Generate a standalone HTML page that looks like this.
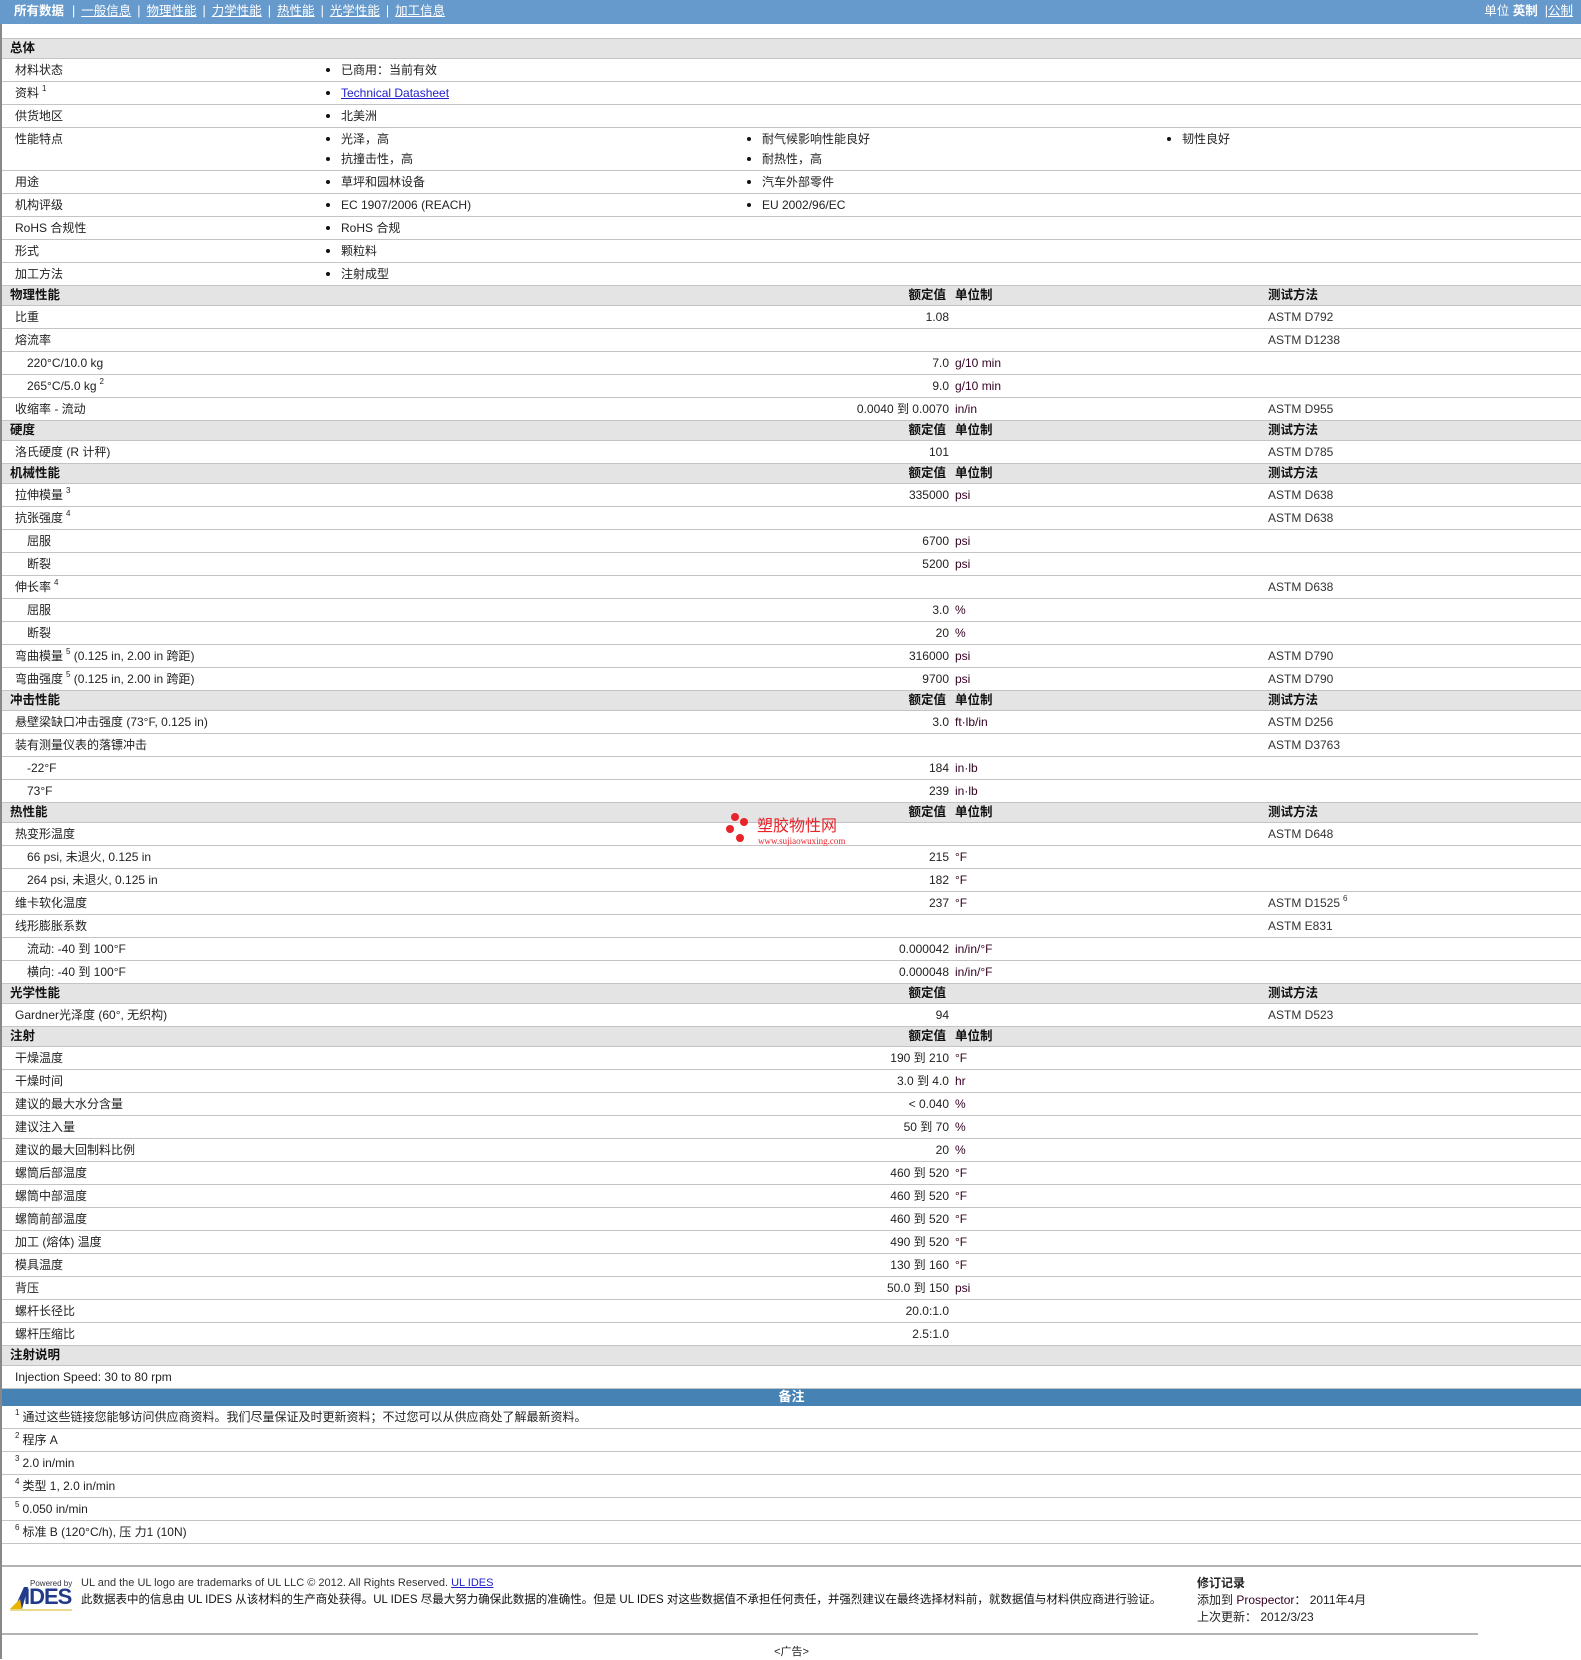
<!DOCTYPE html>
<html><head><meta charset="utf-8"><style>
*{margin:0;padding:0;box-sizing:border-box}
body{width:1581px;height:1660px;background:#fff;font-family:"Liberation Sans","Noto Sans CJK SC",sans-serif;font-size:12px;color:#222;position:relative;overflow:hidden}
.nav{position:absolute;left:0;top:0;width:1581px;height:24px;background:#6699cc;color:#fff;font-size:12.5px;line-height:22px}
.nav a{color:#fff;text-decoration:underline}
.nav .s{margin:0 6px}
.wrap{position:absolute;left:0;top:24px;width:1581px;border-left:2px solid #888}
.sp{height:15px;border-bottom:1px solid #c4c4c4}
.r,.h{position:relative;width:100%;border-bottom:1px solid #c4c4c4}
.r{height:23px;line-height:22px}
.r2{height:43px}
.h{height:20px;line-height:19px;background:#e4e4e4;font-weight:bold;font-size:12.5px;color:#111}
.h .t{position:absolute;left:8px}
.r span,.h span{position:absolute;white-space:nowrap}
.l{left:13px}.l2{left:25px}
.v{right:632px}.u{left:953px;color:#302}.m{left:1266px;color:#333}
.hv{right:635px}.hu{left:953px}.hm{left:1266px}
.b{padding-left:16px}
.b:before{content:"";position:absolute;left:1px;top:9px;width:4px;height:4px;border-radius:50%;background:#111}
.c1{left:323px}.c2{left:744px}.c3{left:1164px}
sup{font-size:8px;vertical-align:6px;margin-left:3px;line-height:0}
a.ln{color:#2222cc;text-decoration:underline}
.nb{height:17px;background:#4682b4;color:#fff;font-weight:bold;text-align:center;line-height:16px;font-size:13px}
.n sup{margin:0 3px 0 0}
</style></head><body>
<div class="nav"><span style="position:absolute;left:14px;font-weight:bold">所有数据</span>
<span style="position:absolute;left:66px"><span class="s">|</span><a>一般信息</a><span class="s">|</span><a>物理性能</a><span class="s">|</span><a>力学性能</a><span class="s">|</span><a>热性能</a><span class="s">|</span><a>光学性能</a><span class="s">|</span><a>加工信息</a></span>
<span style="position:absolute;right:8px">单位 <b>英制</b> &nbsp;|<a>公制</a></span></div>
<div class="wrap">
<div class="sp"></div>
<div class="h"><span class="t">总体</span></div>
<div class="r"><span class="l">材料状态</span><span class="c1 b">已商用：当前有效</span></div>
<div class="r"><span class="l">资料<sup>1</sup></span><span class="c1 b"><a class="ln">Technical Datasheet</a></span></div>
<div class="r"><span class="l">供货地区</span><span class="c1 b">北美洲</span></div>
<div class="r r2"><span class="l">性能特点</span><span class="c1 b">光泽，高</span><span class="c1 b" style="top:20px">抗撞击性，高</span><span class="c2 b">耐气候影响性能良好</span><span class="c2 b" style="top:20px">耐热性，高</span><span class="c3 b">韧性良好</span></div>
<div class="r"><span class="l">用途</span><span class="c1 b">草坪和园林设备</span><span class="c2 b">汽车外部零件</span></div>
<div class="r"><span class="l">机构评级</span><span class="c1 b">EC 1907/2006 (REACH)</span><span class="c2 b">EU 2002/96/EC</span></div>
<div class="r"><span class="l">RoHS 合规性</span><span class="c1 b">RoHS 合规</span></div>
<div class="r"><span class="l">形式</span><span class="c1 b">颗粒料</span></div>
<div class="r"><span class="l">加工方法</span><span class="c1 b">注射成型</span></div>

<div class="h"><span class="t">物理性能</span><span class="hv">额定值</span><span class="hu">单位制</span><span class="hm">测试方法</span></div>
<div class="r"><span class="l">比重</span><span class="v">1.08</span><span class="m">ASTM D792</span></div>
<div class="r"><span class="l">熔流率</span><span class="m">ASTM D1238</span></div>
<div class="r"><span class="l2">220°C/10.0 kg</span><span class="v">7.0</span><span class="u">g/10 min</span></div>
<div class="r"><span class="l2">265°C/5.0 kg<sup>2</sup></span><span class="v">9.0</span><span class="u">g/10 min</span></div>
<div class="r"><span class="l">收缩率 - 流动</span><span class="v">0.0040 到 0.0070</span><span class="u">in/in</span><span class="m">ASTM D955</span></div>
<div class="h"><span class="t">硬度</span><span class="hv">额定值</span><span class="hu">单位制</span><span class="hm">测试方法</span></div>
<div class="r"><span class="l">洛氏硬度 (R 计秤)</span><span class="v">101</span><span class="m">ASTM D785</span></div>
<div class="h"><span class="t">机械性能</span><span class="hv">额定值</span><span class="hu">单位制</span><span class="hm">测试方法</span></div>
<div class="r"><span class="l">拉伸模量<sup>3</sup></span><span class="v">335000</span><span class="u">psi</span><span class="m">ASTM D638</span></div>
<div class="r"><span class="l">抗张强度<sup>4</sup></span><span class="m">ASTM D638</span></div>
<div class="r"><span class="l2">屈服</span><span class="v">6700</span><span class="u">psi</span></div>
<div class="r"><span class="l2">断裂</span><span class="v">5200</span><span class="u">psi</span></div>
<div class="r"><span class="l">伸长率<sup>4</sup></span><span class="m">ASTM D638</span></div>
<div class="r"><span class="l2">屈服</span><span class="v">3.0</span><span class="u">%</span></div>
<div class="r"><span class="l2">断裂</span><span class="v">20</span><span class="u">%</span></div>
<div class="r"><span class="l">弯曲模量<sup>5</sup> (0.125 in, 2.00 in 跨距)</span><span class="v">316000</span><span class="u">psi</span><span class="m">ASTM D790</span></div>
<div class="r"><span class="l">弯曲强度<sup>5</sup> (0.125 in, 2.00 in 跨距)</span><span class="v">9700</span><span class="u">psi</span><span class="m">ASTM D790</span></div>
<div class="h"><span class="t">冲击性能</span><span class="hv">额定值</span><span class="hu">单位制</span><span class="hm">测试方法</span></div>
<div class="r"><span class="l">悬壁梁缺口冲击强度 (73°F, 0.125 in)</span><span class="v">3.0</span><span class="u">ft·lb/in</span><span class="m">ASTM D256</span></div>
<div class="r"><span class="l">装有测量仪表的落镖冲击</span><span class="m">ASTM D3763</span></div>
<div class="r"><span class="l2">-22°F</span><span class="v">184</span><span class="u">in·lb</span></div>
<div class="r"><span class="l2">73°F</span><span class="v">239</span><span class="u">in·lb</span></div>
<div class="h"><span class="t">热性能</span><span class="hv">额定值</span><span class="hu">单位制</span><span class="hm">测试方法</span></div>
<div class="r"><span class="l">热变形温度</span><span class="m">ASTM D648</span></div>
<div class="r"><span class="l2">66 psi, 未退火, 0.125 in</span><span class="v">215</span><span class="u">°F</span></div>
<div class="r"><span class="l2">264 psi, 未退火, 0.125 in</span><span class="v">182</span><span class="u">°F</span></div>
<div class="r"><span class="l">维卡软化温度</span><span class="v">237</span><span class="u">°F</span><span class="m">ASTM D1525<sup>6</sup></span></div>
<div class="r"><span class="l">线形膨胀系数</span><span class="m">ASTM E831</span></div>
<div class="r"><span class="l2">流动: -40 到 100°F</span><span class="v">0.000042</span><span class="u">in/in/°F</span></div>
<div class="r"><span class="l2">横向: -40 到 100°F</span><span class="v">0.000048</span><span class="u">in/in/°F</span></div>
<div class="h"><span class="t">光学性能</span><span class="hv">额定值</span><span class="hm">测试方法</span></div>
<div class="r"><span class="l">Gardner光泽度 (60°, 无织构)</span><span class="v">94</span><span class="m">ASTM D523</span></div>
<div class="h"><span class="t">注射</span><span class="hv">额定值</span><span class="hu">单位制</span></div>
<div class="r"><span class="l">干燥温度</span><span class="v">190 到 210</span><span class="u">°F</span></div>
<div class="r"><span class="l">干燥时间</span><span class="v">3.0 到 4.0</span><span class="u">hr</span></div>
<div class="r"><span class="l">建议的最大水分含量</span><span class="v">&lt; 0.040</span><span class="u">%</span></div>
<div class="r"><span class="l">建议注入量</span><span class="v">50 到 70</span><span class="u">%</span></div>
<div class="r"><span class="l">建议的最大回制料比例</span><span class="v">20</span><span class="u">%</span></div>
<div class="r"><span class="l">螺筒后部温度</span><span class="v">460 到 520</span><span class="u">°F</span></div>
<div class="r"><span class="l">螺筒中部温度</span><span class="v">460 到 520</span><span class="u">°F</span></div>
<div class="r"><span class="l">螺筒前部温度</span><span class="v">460 到 520</span><span class="u">°F</span></div>
<div class="r"><span class="l">加工 (熔体) 温度</span><span class="v">490 到 520</span><span class="u">°F</span></div>
<div class="r"><span class="l">模具温度</span><span class="v">130 到 160</span><span class="u">°F</span></div>
<div class="r"><span class="l">背压</span><span class="v">50.0 到 150</span><span class="u">psi</span></div>
<div class="r"><span class="l">螺杆长径比</span><span class="v">20.0:1.0</span></div>
<div class="r"><span class="l">螺杆压缩比</span><span class="v">2.5:1.0</span></div>
<div class="h"><span class="t">注射说明</span></div>
<div class="r"><span class="l">Injection Speed: 30 to 80 rpm</span></div>
<div class="nb">备注</div>
<div class="r n"><span style="left:13px"><sup>1</sup>通过这些链接您能够访问供应商资料。我们尽量保证及时更新资料；不过您可以从供应商处了解最新资料。</span></div>
<div class="r n"><span style="left:13px"><sup>2</sup>程序 A</span></div>
<div class="r n"><span style="left:13px"><sup>3</sup>2.0 in/min</span></div>
<div class="r n"><span style="left:13px"><sup>4</sup>类型 1, 2.0 in/min</span></div>
<div class="r n"><span style="left:13px"><sup>5</sup>0.050 in/min</span></div>
<div class="r n"><span style="left:13px"><sup>6</sup>标准 B (120°C/h), 压 力1 (10N)</span></div>
<div style="height:23px;border-bottom:2px solid #b4b4b4"></div>
<div style="position:relative;height:66px;border-bottom:0">
 <div style="position:absolute;left:8px;top:12px;width:62px;height:30px">
  <div style="position:absolute;left:20px;top:0;font-size:8px;color:#334;white-space:nowrap">Powered by</div>
  <svg style="position:absolute;left:0;top:6px" width="20" height="24"><polygon points="4,24 14,2 18,2 12,24" fill="#223a8a"/><polygon points="0,24 10,14 12,24" fill="#e8b400"/></svg>
  <div style="position:absolute;left:14px;top:5px;font-size:22px;font-weight:bold;color:#223a8a;letter-spacing:-1px">IDES</div>
  <div style="position:absolute;left:0;top:30px;width:62px;height:2px;background:#e8d890"></div>
 </div>
 <div style="position:absolute;left:79px;top:10px;font-size:11px;color:#333;white-space:nowrap">UL and the UL logo are trademarks of UL LLC © 2012. All Rights Reserved. <a class="ln">UL IDES</a></div>
 <div style="position:absolute;left:79px;top:24px;font-size:11.5px;color:#111;white-space:nowrap">此数据表中的信息由 UL IDES 从该材料的生产商处获得。UL IDES 尽最大努力确保此数据的准确性。但是 UL IDES 对这些数据值不承担任何责任，并强烈建议在最终选择材料前，就数据值与材料供应商进行验证。</div>
 <div style="position:absolute;left:1195px;top:8px;line-height:17px;white-space:nowrap"><b>修订记录</b><br>添加到 <span style="position:static;color:#302">Prospector：</span> 2011年4月<br>上次更新： 2012/3/23</div>
</div>
<div style="width:1476px;border-bottom:2px solid #b4b4b4"></div>
<div style="text-align:center;margin-top:8px;font-size:11px">&lt;广告&gt;</div>
</div>
<div style="position:absolute;left:726px;top:813px;width:26px;height:32px">
 <div style="position:absolute;left:5px;top:0;width:8px;height:8px;border-radius:50%;background:#e8232a"></div>
 <div style="position:absolute;left:14px;top:5px;width:8px;height:8px;border-radius:50%;background:#e8232a"></div>
 <div style="position:absolute;left:0;top:12px;width:8px;height:8px;border-radius:50%;background:#e8232a"></div>
 <div style="position:absolute;left:10px;top:21px;width:8px;height:8px;border-radius:50%;background:#e8232a"></div>
</div>
<div style="position:absolute;left:757px;top:815px;font-size:16px;color:#e8232a;white-space:nowrap;font-family:'Noto Sans CJK SC',sans-serif;line-height:18px">塑胶物性网</div>
<div style="position:absolute;left:758px;top:836px;font-size:9px;color:#e8232a;white-space:nowrap;font-family:'Liberation Serif',serif">www.sujiaowuxing.com</div>
</body></html>
